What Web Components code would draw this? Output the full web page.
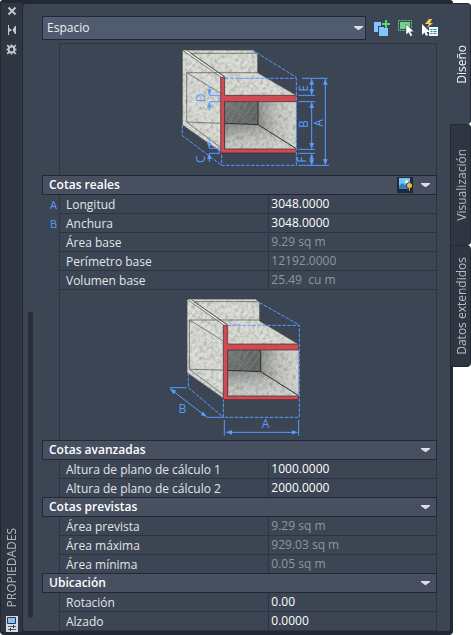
<!DOCTYPE html>
<html lang="es">
<head>
<meta charset="utf-8">
<meta name="viewport" content="width=device-width, initial-scale=1">
<title>Propiedades</title>
<style>
  body {
    margin: 0;
    background: #fff;
    font: 12px/18px "Open Sans", "Noto Sans", sans-serif;
    color: #e1e4e8;
    --panel: #3c4553;
    --bar: #2f3541;
    --edge: #222834;
    --line: #2d3441;
    --head: #474f61;
    --blue: #589bff;
  }
</style>
</head>
<body>
<palette-window>
  <palette-titlebar slot="bar" name="PROPIEDADES"></palette-titlebar>
  <palette-toolbar slot="tools"></palette-toolbar>
  <section-figure kind="heights"></section-figure>
  <prop-section heading="Cotas reales" picture>
    <prop-row mark="A" label="Longitud" value="3048.0000"></prop-row>
    <prop-row mark="B" label="Anchura" value="3048.0000"></prop-row>
    <prop-row label="Área base" value="9.29 sq m" readonly></prop-row>
    <prop-row label="Perímetro base" value="12192.0000" readonly></prop-row>
    <prop-row label="Volumen base" value="25.49  cu m" readonly></prop-row>
  </prop-section>
  <section-figure kind="plan"></section-figure>
  <prop-section heading="Cotas avanzadas">
    <prop-row label="Altura de plano de cálculo 1" value="1000.0000"></prop-row>
    <prop-row label="Altura de plano de cálculo 2" value="2000.0000"></prop-row>
  </prop-section>
  <prop-section heading="Cotas previstas" joined>
    <prop-row label="Área prevista" value="9.29 sq m" readonly></prop-row>
    <prop-row label="Área máxima" value="929.03 sq m" readonly></prop-row>
    <prop-row label="Área mínima" value="0.05 sq m" readonly></prop-row>
  </prop-section>
  <prop-section heading="Ubicación" joined>
    <prop-row label="Rotación" value="0.00"></prop-row>
    <prop-row label="Alzado" value="0.0000"></prop-row>
  </prop-section>
  <palette-tabs slot="tabs" labels="Diseño|Visualización|Datos extendidos"></palette-tabs>
</palette-window>

<script>
class Base extends HTMLElement {
  connectedCallback() {
    if (!this.shadowRoot) this.attachShadow({ mode: "open" }).innerHTML = this.render();
  }
  attr(name) { return this.getAttribute(name) || ""; }
}
const buttonReset = "button{appearance:none;border:0;padding:0;margin:0;background:none;color:inherit;font:inherit;cursor:pointer}svg{display:block}";

customElements.define("palette-window", class extends Base {
  render() {
    return `<style>
      :host{display:grid;grid-template-columns:minmax(0,1fr) 18px;min-height:100vh}
      .frame{grid-area:1/1;display:grid;grid-template-columns:22px minmax(0,1fr);background:var(--edge);padding:3px 3px 3px 0;border-radius:3px 3px 4px 4px}
      .bar{background:var(--bar);display:grid;border-left:1px solid var(--edge)}
      .panel{background:var(--panel);border-left:1px solid var(--edge);border-radius:4px 0 3px 4px;display:grid;grid-template-columns:5px minmax(0,1fr);column-gap:9px;padding:0 13px 0 5px;border-top:1px solid var(--edge);border-bottom:1px solid var(--edge)}
      .scroll{margin:308px 0 13px;background:#282e3a;border-radius:3px}
      .body{display:flex;flex-direction:column}
      .list{display:flex;flex-direction:column}
      .tabs{grid-area:1/1/2/3;justify-self:end;align-self:start;width:21px;margin-top:3px}
    </style>
    <div class="frame"><div class="bar"><slot name="bar"></slot></div>
      <div class="panel"><div class="scroll" role="presentation"></div>
        <div class="body"><slot name="tools"></slot><div class="list"><slot></slot></div></div></div></div>
    <div class="tabs"><slot name="tabs"></slot></div>`;
  }
});

customElements.define("palette-titlebar", class extends Base {
  render() {
    return `<style>${buttonReset}
      :host{display:flex;flex-direction:column;align-items:center;color:#c4c7cc;padding:3px 0 0}
      button{width:21px;height:19px;display:grid;justify-items:center;align-items:start}
      .name{margin:auto 0 9px;writing-mode:vertical-rl;transform:rotate(180deg);line-height:18px;color:#b3b7be}
    </style>
    <button aria-label="Cerrar"><svg width="10" height="10" viewBox="0 0 10 10"><path d="M1.500 1.500l7 7M8.500 1.500l-7 7" stroke="currentColor" stroke-width="2"/></svg></button>
    <button aria-label="Ocultar automáticamente"><svg width="10" height="10" viewBox="0 0 10 10"><path d="M1 0h1v10H1zM2 3l3 2-3 2zM9 1v8H8L5.500 5 8 1z" fill="currentColor"/></svg></button>
    <button aria-label="Propiedades de paleta"><svg width="11" height="11" viewBox="0 0 11 11" fill="none" stroke="currentColor"><circle cx="5.500" cy="5.500" r="2.900" stroke-width="2"/><path d="M5.500 .5v2M5.500 8.500v2M.5 5.500h2M8.500 5.500h2M1.200 1.200l2 2M9.800 1.200l-2 2M1.200 9.800l2-2M9.800 9.800l-2-2" stroke-width="1.700"/></svg></button>
    <span class="name">${this.attr("name")}</span>
    <svg width="12" height="16" viewBox="0 0 12 16"><path fill="#d8dade" d="M0 0h12v16H0z"/><path fill="#7cc4ff" stroke="#2f3541" d="M1.500 1.500h8v6h-8z"/><path d="M2 10.500h8M2 13.500h8" stroke="#59606c"/><path d="M7.500 9v3M4.500 12v3" stroke="#30363f"/></svg>`;
  }
});

customElements.define("palette-toolbar", class extends Base {
  render() {
    return `<style>${buttonReset}
      :host{display:flex;align-items:center;padding:12px 0 3px;margin-right:-5px}
      .pick{flex:1;display:grid;align-items:center;margin-right:4px}
      select,.pick svg{grid-area:1/1}
      select{appearance:none;width:100%;height:24px;margin:0;padding:0 24px 1px 4px;border:1px solid var(--edge);border-radius:1px;background:#4f5b70;color:#eef0f3;font:inherit}
      .pick svg{justify-self:end;margin-right:3px;pointer-events:none}
      button{width:24px;height:24px;display:grid;place-items:center}
    </style>
    <div class="pick"><select aria-label="Tipo de objeto"><option>Espacio</option></select>
      <svg width="9" height="5" viewBox="0 0 9 5"><path d="M0 0h9v1L5 4H4L0 1z" fill="#dddfe2"/></svg></div>
    <button aria-label="Añadir a selección"><svg width="18" height="18" viewBox="0 0 18 18"><path fill="#83c6fb" d="M1 3h7v4H5v6H1z"/><path fill="#83c6fb" d="M6 8h9v9H6z"/><path d="M13 1v8M9 5h8" stroke="#3c4553" stroke-width="4"/><path d="M13 1v8M9 5h8" stroke="#55d77d" stroke-width="2"/></svg></button>
    <button aria-label="Seleccionar objetos"><svg width="18" height="18" viewBox="0 0 18 18"><path fill="#76cf91" d="M3 3h10v7H3z"/><path d="M1.500 1.500h13v10h-13z" fill="none" stroke="#48d975" stroke-dasharray="2 1"/><path fill="#fff" stroke="#3c4553" stroke-width=".5" d="M9 5v11l2.500-2.400 2 4 2-1-2-3.800H17z"/></svg></button>
    <button aria-label="Selección rápida"><svg width="18" height="18" viewBox="0 0 18 18"><path fill="#ffc85c" d="M8 0L4 5h4L6 9l6-5H9l2-4z"/><path fill="#fff" d="M1 5v11l2.500-2.400L5 17l2-1-1.500-3H9z"/><path fill="#f1f3f5" d="M8 8h9v9H8z"/><path d="M9.500 10.500h2M9.500 12.500h2M9.500 14.500h2M12.500 10.500h3M12.500 12.500h3M12.500 14.500h3" stroke="#1685d3"/></svg></button>`;
  }
});

customElements.define("prop-section", class extends Base {
  render() {
    const pic = this.hasAttribute("picture") ? `<button class="pic" aria-label="Mostrar imagen"><svg width="16" height="16" viewBox="0 0 16 16"><path fill="#222834" d="M0 0h16v16H0z"/><path fill="#76c3fb" d="M2 1h11v11H2z"/><path fill="#2c80c1" d="M2 9l3-3 3 2 2-2 3 2v4H2z"/><circle cx="9.500" cy="4.500" r="1.500" fill="#fff8b5"/><circle cx="12.500" cy="8.500" r="3" fill="#222834"/><circle cx="12.500" cy="8.500" r="2.500" fill="#ffb52e"/><path fill="#c8a33d" d="M12 11h1v3h-1z"/></svg></button>` : "";
    return `<style>${buttonReset}
      :host{display:block}
      :host([joined]){margin-top:-1px;z-index:1}
      header{display:flex;align-items:center;height:18px;border:1px solid var(--edge);background:var(--head);padding:0 6px}
      h2{flex:1;margin:0;font-size:12px;line-height:18px;font-weight:600;color:#fff}
      .pic{margin-right:7px}
      .fold{width:10px;height:18px;display:grid;place-items:center}
    </style>
    <header><h2>${this.attr("heading")}</h2>${pic}<button class="fold" aria-label="Contraer ${this.attr("heading")}"><svg width="9" height="5" viewBox="0 0 9 5"><path d="M0 0h9v1L5 4H4L0 1z" fill="#dddfe2"/></svg></button></header>
    <slot></slot>`;
  }
});

customElements.define("prop-row", class extends Base {
  render() {
    const value = this.hasAttribute("readonly")
      ? `<output id="v">${this.attr("value")}</output>`
      : `<input id="v" value="${this.attr("value")}">`;
    return `<style>
      :host{display:grid;grid-template-columns:17px 53% minmax(0,1fr);grid-template-rows:19px;line-height:20px}
      .mark{color:var(--blue);font-size:11px;text-align:right;padding-right:2px}
      label{border-left:1px solid var(--line);border-bottom:1px solid var(--line);padding-left:6px;white-space:nowrap;overflow:hidden;box-sizing:border-box}
      .cell{border:1px solid var(--line);border-top:0;padding-left:2px;min-width:0;box-sizing:border-box;display:grid}
      input{appearance:none;width:100%;min-width:0;border:0;padding:0;margin:0;height:18px;background:none;color:#fff;font:inherit;line-height:18px;outline:0}
      output{color:#8f959e;white-space:pre;line-height:18px}
    </style>
    <span class="mark">${this.attr("mark")}</span><label for="v">${this.attr("label")}</label><div class="cell">${value}</div>`;
  }
});

customElements.define("palette-tabs", class extends Base {
  render() {
    const tabs = this.attr("labels").split("|").map((t, i) =>
      `<button role="tab" aria-selected="${i === 0}"><span>${t}</span></button>`).join("");
    return `<style>${buttonReset}
      :host{display:flex;flex-direction:column}
      button{height:121px;box-sizing:border-box;display:grid;place-items:center;background:var(--bar);border:1px solid var(--edge);border-bottom:0;border-radius:0 4px 4px 0;color:#b9bdc4;padding-left:3px}
      button:last-child{height:122px;border-bottom:1px solid var(--edge)}
      button[aria-selected=true]{background:var(--panel);border-left:0;color:#f4f5f7;padding-left:4px}
      span{writing-mode:vertical-rl;transform:rotate(180deg);line-height:16px;white-space:nowrap}
    </style>${tabs}`;
  }
});

const kinds = {
  heights: {
    view: "-12 12 492 393",
    height: 131,
    back: "37,30 247,30 263,41 263,98 379,166 379,185 155,185 155,338 37,255",
    rim: "37,30 52,32 165,112 154,112",
    inner: "M62 40H258M62 40L165 110M50 98H263M50 98V246M50 98L152 160M50 246L152 250M50 246L155 325",
    outline: "M37 30H247L263 41V98L379 166M37 30L154 112M52 32L165 112M37 30V255L155 337",
    room: "165,185 379,185 379,328 165,328",
    dark: "165,185 264,185 264,254 165,250",
    floor: "165,250 264,254 379,326 165,326",
    edges: "M264 185V254L165 250M264 254L379 326",
    red: "M152 112h12v54h215v19H164v142h215v12H152z",
    dash: "M247 30L379 112M165 115H379V376H155V340M37 255V287L155 376",
    dims: "M425 117V164M425 187V326M425 342V376M466 117V374",
    ins: "M118 138V165M118 212V186M118 298V325M118 366V341",
    ticks: "M396 115H473M385 166H435M385 185H435M385 328H435M385 340H435M385 376H477M118 166H150M118 185H150M118 325H150M118 340H150M147 166V185M147 325V340",
    letters: [["A", 458, 249], ["B", 415, 252], ["E", 415, 145], ["F", 409, 359], ["D", 106, 174], ["C", 106, 358]],
    turn: -90
  },
  plan: {
    view: "-12 0 492 450",
    height: 150,
    back: "51,27 257,27 269,38 269,93 385,162 385,180 163,180 163,328 51,248",
    rim: "51,27 64,29 174,106 162,107",
    inner: "M72 35H263M72 35L170 103M58 90H269M58 90V238M58 90L160 153M58 238L160 240M58 238L163 316",
    outline: "M51 27H257L269 38V93L385 162M51 27L162 106M64 29L174 106M51 27V248L163 327",
    room: "173,180 386,180 386,318 173,318",
    dark: "173,180 272,180 272,245 173,241",
    floor: "173,241 272,245 386,317 173,317",
    edges: "M272 180V245L173 241M272 245L386 317",
    red: "M160 106h13v56h213v18H173v138h213v11H160z",
    dash: "M269 38L388 105M172 106H388V382H160V328M55 248V293L160 382",
    dims: "M169 427H382M1 297L109 380",
    ins: "",
    ticks: "M163 390V437M386 390V437M0 293H50M109 382H160",
    letters: [["A", 287, 413], ["B", 37, 368]],
    turn: 0
  }
};

customElements.define("section-figure", class extends Base {
  render() {
    const k = kinds[this.attr("kind")];
    const lines = (d, ends) => d ? d.split(/(?=M)/).map(s => `<path d="${s}" ${ends}/>`).join("") : "";
    const letters = k.letters.map(([t, x, y]) => k.turn
      ? `<text transform="translate(${x} ${y}) rotate(${k.turn})">${t}</text>`
      : `<text x="${x}" y="${y}">${t}</text>`).join("");
    return `<style>
      :host{display:grid;justify-items:center;margin-left:17px;border:1px solid var(--line);border-bottom:0}
      :host([kind=plan]){border-top:0}
      svg{display:block}
      text{font:36px "Open Sans",sans-serif;fill:#589bff;text-anchor:middle}
    </style>
    <svg width="164" height="${k.height}" viewBox="${k.view}" fill="none" role="img" aria-label="Cotas del espacio">
      <defs>
        <filter id="grain" x="0" y="0" width="100%" height="100%" color-interpolation-filters="sRGB"><feTurbulence type="fractalNoise" baseFrequency=".09" numOctaves="2" seed="4" result="n"/><feColorMatrix in="n" values="0 0 0 0 .3  0 0 0 0 .3  0 0 0 0 .3  .7 0 0 0 -.3"/><feComposite in2="SourceGraphic" operator="in" result="g"/><feMerge><feMergeNode in="SourceGraphic"/><feMergeNode in="g"/></feMerge></filter>
        <pattern id="hatch" width="17" height="90" patternUnits="userSpaceOnUse" patternTransform="rotate(42)"><path d="M2 0V50M6 30V90M11 10V70M15 50V90" stroke="#666965" stroke-width="2" opacity=".2"/><path d="M4 10V60M9 50V90M13 0V30" stroke="#fff" stroke-width="2" opacity=".35"/></pattern>
        <linearGradient id="shade"><stop offset="0" stop-color="#777977"/><stop offset=".45" stop-color="#8a8c88"/><stop offset=".7" stop-color="#c0c2bd"/><stop offset="1" stop-color="#d8dad4"/></linearGradient>
        <linearGradient id="ground" x2=".4" y2="1"><stop stop-color="#858886"/><stop offset=".6" stop-color="#bfc1bd"/><stop offset="1" stop-color="#d0d2cd"/></linearGradient>
        <linearGradient id="wall" x2="1" y2=".5"><stop stop-color="#747877"/><stop offset="1" stop-color="#616565"/></linearGradient>
        <marker id="tip" viewBox="0 0 18 14" markerUnits="userSpaceOnUse" markerWidth="18" markerHeight="14" refX="17" refY="7" orient="auto-start-reverse"><path d="M0 0L18 7L0 14z" fill="#589bff"/></marker>
      </defs>
      <g filter="url(#grain)">
        <polygon points="${k.back}" fill="#dcded8"/>
        <polygon points="${k.room}" fill="url(#shade)"/>
        <polygon points="${k.floor}" fill="url(#ground)"/>
        <polygon points="${k.dark}" fill="url(#wall)"/>
      </g>
      <polygon points="${k.back}" fill="url(#hatch)"/>
      <polygon points="${k.room}" fill="url(#hatch)" opacity=".6"/>
      <polygon points="${k.rim}" fill="#eceee8"/>
      <path d="${k.inner}" stroke="#50534f" stroke-width="2"/>
      <path d="${k.outline}" stroke="#424540" stroke-width="2"/>
      <path d="${k.edges}" stroke="#2f312f" stroke-width="3"/>
      <path d="${k.red}" fill="#cf4a54" stroke="#3d282b" stroke-width="2"/>
      <g stroke="#589bff" stroke-width="3">
        <path d="${k.dash}" stroke-dasharray="11 4"/>
        <path d="${k.ticks}"/>
        ${lines(k.dims, 'marker-start="url(#tip)" marker-end="url(#tip)"')}
        ${lines(k.ins, 'marker-end="url(#tip)"')}
      </g>
      ${letters}
    </svg>`;
  }
});
</script>
</body>
</html>
